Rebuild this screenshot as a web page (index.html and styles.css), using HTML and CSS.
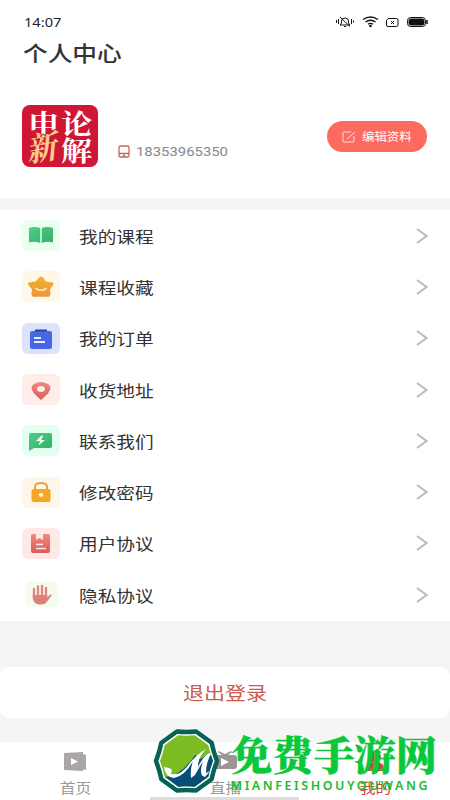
FILE: index.html
```html
<!DOCTYPE html>
<html lang="zh-CN">
<head>
<meta charset="utf-8">
<title>个人中心</title>
<link rel="stylesheet" href="styles.css">
</head>
<body>
<div class="app">
  <header class="status">
    <span class="time">14:07</span>
    <svg class="status-icons" width="94" height="14" viewBox="0 0 94 14" fill="none" stroke="#111" stroke-width="1">
      <path d="M1.500 5v3M3.500 4v5M16.500 4v5M18.500 5.500v2M5 10h10l-1.500-2V6q0-3-3.500-3T6.500 6v2L5 10M9 11.500h2M5 2l10 9.500"/>
      <g stroke-width="1.400"><path d="M28 4.500q7.500-5 15 0M30.500 7q5-3.500 10 0M33 9.300q2.500-1.800 5 0"/><circle cx="35.500" cy="11" r=".6" fill="#111"/></g>
      <path d="M53 3.500h8.500q1.500 0 1.500 1.500v5q0 1.500-1.500 1.500H53q-1.500 0-1.500-1.500V5.500zM56 6l3 3M59 6l-3 3"/>
      <rect x="72.500" y="2.500" width="18" height="9" rx="3"/><rect x="74" y="4" width="15" height="6" rx="1.500" fill="#111"/><path d="M92 5v4" stroke-width="1.500"/>
    </svg>
  </header>
  <h1 class="title"><span>个人中心</span></h1>

  <section class="profile">
    <div class="avatar">
      <svg width="76" height="62" viewBox="0 0 76 62">
        <rect width="76" height="62" rx="8" fill="#cf1735"/>
        <g class="avatar-text" fill="#fff">
          <text transform="translate(6 29) scale(1.160 1)" font-size="27">申</text>
          <text transform="translate(39 29) scale(1.160 1)" font-size="27">论</text>
          <text transform="translate(39 56) scale(1.160 1)" font-size="27">解</text>
        </g>
        <text class="avatar-text" transform="translate(6 57) rotate(-9) skewX(-14) scale(1 1.080)" font-size="30" fill="#f8ca8d" stroke="#cf1735" stroke-width="1.500" paint-order="stroke">新</text>
      </svg>
    </div>
    <div class="phone">
      <svg width="12" height="13" viewBox="0 0 12 13" fill="none" stroke="#c5655d" stroke-width="1.300"><rect x="1" y="1" width="10" height="11" rx="1.500"/><path d="M1 8.500h10M5 10.300h2"/></svg>
      <span>18353965350</span>
    </div>
    <div class="edit">
      <svg width="14" height="12" viewBox="0 0 14 12" fill="none" stroke="#ffe3df" stroke-width="1"><path d="M9 1H2q-1 0-1 1v8q0 1 1 1h9q1 0 1-1V5M5 8l8-7"/></svg>
      <span>编辑资料</span>
    </div>
  </section>

  <main class="menu">
    <div class="row"><svg class="tile" viewBox="0 0 38 31">
      <defs>
        <linearGradient id="green" x2="1" y2="1"><stop stop-color="#4cd083"/><stop offset="1" stop-color="#35ac68"/></linearGradient>
        <linearGradient id="gold" x2="0" y2="1"><stop stop-color="#f3b12d"/><stop offset="1" stop-color="#ed943b"/></linearGradient>
        <linearGradient id="blue" x2="0" y2="1"><stop stop-color="#456bd8"/><stop offset="1" stop-color="#4862ee"/></linearGradient>
        <linearGradient id="red" x2="0" y2="1"><stop stop-color="#ef8b7e"/><stop offset="1" stop-color="#d95c56"/></linearGradient>
      </defs>
      <rect width="38" height="31" rx="6" fill="#eafff0"/><path d="M7 8q6-2 11 0v15q-5-2-11-.5zM20 8q5-2 11 0v14.500q-6-1.500-11 .5z" fill="url(#green)"/><path d="M18 8.500l1 1 1-1v14.500h-2z" fill="#b8efcf"/></svg><span class="label">我的课程</span><svg class="chevron" viewBox="0 0 12 16"><path d="M1 1l9.500 7L1 15"/></svg></div>
    <div class="row"><svg class="tile" viewBox="0 0 38 31"><rect width="38" height="31" rx="6" fill="#fff8ea"/><path d="M17 6.500q2-2 4 0l3 4 6 .8q3 1 .8 3L28 18.500l.5 5q-.5 3-3.500 2.300H13q-3 .7-3.500-2.300l.5-5-3.300-4.200q-2-2 1-3l6-.8z" fill="url(#gold)"/><path d="M14 17.500q5 3.500 10 0" fill="none" stroke="#fff0b8" stroke-width="1.600" stroke-linecap="round"/></svg><span class="label">课程收藏</span><svg class="chevron" viewBox="0 0 12 16"><path d="M1 1l9.500 7L1 15"/></svg></div>
    <div class="row"><svg class="tile" viewBox="0 0 38 31"><rect width="38" height="31" rx="6" fill="#dce2fc"/><rect x="8" y="8" width="22" height="18" rx="2" fill="url(#blue)"/><path d="M13 6.500h12v2H13z" fill="#28469f"/><path d="M12 15h7M12 19h11" stroke="#e8edff" stroke-width="2"/></svg><span class="label">我的订单</span><svg class="chevron" viewBox="0 0 12 16"><path d="M1 1l9.500 7L1 15"/></svg></div>
    <div class="row"><svg class="tile" viewBox="0 0 38 31"><rect width="38" height="31" rx="6" fill="#ffedea"/><path d="M19 26l-7-6.500q-5-6.500 0-9.500 7-4 14 0 5 3 0 9.500z" fill="url(#red)"/><ellipse cx="19" cy="15" rx="4" ry="3" fill="#ffe9e4"/></svg><span class="label">收货地址</span><svg class="chevron" viewBox="0 0 12 16"><path d="M1 1l9.500 7L1 15"/></svg></div>
    <div class="row"><svg class="tile" viewBox="0 0 38 31"><rect width="38" height="31" rx="6" fill="#e3fff0"/><path d="M9 8h19q2 0 2 2v11q0 2-2 2H12l-5 3V10q0-2 2-2z" fill="url(#green)"/><path d="M19.500 10.500L14 16h4l-1.500 4.500L23 15h-4l2-4z" fill="#f1fff5"/></svg><span class="label">联系我们</span><svg class="chevron" viewBox="0 0 12 16"><path d="M1 1l9.500 7L1 15"/></svg></div>
    <div class="row"><svg class="tile" viewBox="0 0 38 31"><rect width="38" height="31" rx="6" fill="#fff6e7"/><path d="M13 13V10q0-4 6-4t6 4v3" fill="none" stroke="#dda848" stroke-width="2"/><rect x="9.500" y="12" width="19" height="13" rx="2" fill="#f5a623"/><ellipse cx="19" cy="18" rx="2.300" ry="2" fill="#fff5dc"/></svg><span class="label">修改密码</span><svg class="chevron" viewBox="0 0 12 16"><path d="M1 1l9.500 7L1 15"/></svg></div>
    <div class="row"><svg class="tile" viewBox="0 0 38 31"><rect width="38" height="31" rx="6" fill="#ffe8e5"/><path d="M11 6h3v6l3.500-2 3.500 2V6h5q2 0 2 2v15q0 2-2 2H11q-2 0-2-2V8q0-2 2-2z" fill="url(#red)"/><path d="M14 16.500h7M14 20.500h10" stroke="#ffe8e3" stroke-width="1.600"/></svg><span class="label">用户协议</span><svg class="chevron" viewBox="0 0 12 16"><path d="M1 1l9.500 7L1 15"/></svg></div>
    <div class="row"><svg class="tile" viewBox="0 0 38 31"><rect x="3" y="2" width="33" height="26" rx="6" fill="#f6fbef"/><path d="M12 10v8M16 7.500V18M20 7v11M24 9v9" stroke="#e08a7f" stroke-width="2.400" stroke-linecap="round"/><path d="M10.800 16h14.500v2.500l3-3q2-.3 1.200 1L25.500 22q-2 3.500-7 3.500-7 0-7.700-6z" fill="#dc8176"/></svg><span class="label">隐私协议</span><svg class="chevron" viewBox="0 0 12 16"><path d="M1 1l9.500 7L1 15"/></svg></div>
  </main>

  <div class="logout"><span>退出登录</span></div>

  <nav class="tabs">
    <div class="tab"><svg width="24" height="21" viewBox="0 0 24 21"><path d="M1 2l19-1v2l3 1v15l-3-.5v1.500L1 19z" fill="#aaa5a7"/><path d="M8 7l7 3.500L8 14z" fill="#fff"/></svg><span>首页</span></div>
    <div class="tab"><svg width="26" height="21" viewBox="0 0 26 21"><path d="M7 0l6 3 6-3 1 1-4 3h6q3 0 3 3v8q0 3-3 3H4q-3 0-3-3V7q0-3 3-3h6L6 1z" fill="#9b9597"/><path d="M9 7l8 4-8 4z" fill="#fff"/></svg><span>直播</span></div>
    <div class="tab active"><svg width="24" height="21" viewBox="0 0 24 21"><ellipse cx="12" cy="6" rx="6" ry="5.500" fill="#c94b43"/><path d="M2 20q0-9 10-9t10 9z" fill="#c94b43"/></svg><span>我的</span></div>
  </nav>
  <div class="home-bar"></div>

  <div class="watermark">
    <svg width="298" height="72" viewBox="0 0 298 72">
      <defs>
        <path id="badge" d="M43.100 4.500Q50 9.500 58.600 15.800Q60.500 25 64 34Q60.500 43 58.600 52.200Q50 58.500 43.100 63.500Q33.500 62.500 23.900 63.500Q17 58.500 8.400 52.200Q6.500 43 3 34Q6.500 25 8.400 15.800Q17 9.500 23.900 4.500Q33.500 5.500 43.100 4.500z"/>
        <clipPath id="inner"><use href="#badge" transform="translate(4.350 4.420) scale(.87)"/></clipPath>
      </defs>
      <use href="#badge" fill="#fff" stroke="#066157" stroke-width="4.500" stroke-linejoin="round"/>
      <g clip-path="url(#inner)">
        <path d="M0 0h70v70H0z" fill="#7dbd24"/>
        <path d="M8 50q18 2 34-22l6 4 14-11v50H8z" fill="#064e79"/>
        <path d="M11 40l5 1 3 2-1 4q10 2 18-10 7-9 17-15-8 8-8 18 6-13 15-16-7 9-7 22l4-2-5 6q-7-1-2-16l-8 14-4 3q-1-9 2-17Q32 49 21 51 12 50 11 40z" fill="#fff"/>
      </g>
      <text class="mark-cn" transform="translate(78 43) scale(1 .97)" font-size="41.500" textLength="206" lengthAdjust="spacingAndGlyphs">免费手游网</text>
      <text class="mark-en" x="77.500" y="63" font-size="12.500" textLength="197">MIANFEISHOUYOUWANG</text>
    </svg>
  </div>
</div>
</body>
</html>
```
FILE: styles.css
```css
* { box-sizing: border-box; }

body {
  margin: 0;
  font-family: "Noto Sans", "Noto Sans CJK SC", sans-serif;
  color: #333;
}

.app {
  position: relative;
  display: flex;
  flex-direction: column;
  width: 450px;
  height: 800px;
  overflow: hidden;
  background: #f5f5f5;
}

svg { display: block; flex: none; }

.status {
  display: flex;
  justify-content: space-between;
  align-items: center;
  height: 36px;
  padding: 8px 21px 0 24px;
  background: #fff;
}

.time {
  font-size: 12.5px;
  color: #222;
  transform: scaleX(1.17);
  transform-origin: left;
}

.title {
  margin: 0;
  height: 46px;
  padding-left: 23px;
  font-size: 21px;
  font-weight: 500;
  line-height: 35px;
  background: #fff;
}

.title span {
  display: inline-block;
  transform: scaleX(1.175);
  transform-origin: left;
}

.profile {
  display: flex;
  height: 116px;
  padding: 23px 23px 0 22px;
  background: #fff;
}

.avatar-text { font-family: "Noto Serif CJK SC", "Noto Sans CJK SC", serif; font-weight: 700; }

.phone {
  display: flex;
  align-items: center;
  gap: 6px;
  height: 20px;
  margin: 36px 0 0 20px;
  font-family: Roboto, sans-serif;
  font-size: 12.5px;
  color: #888;
}

.phone span {
  transform: scaleX(1.19);
  transform-origin: left;
}

.edit {
  display: flex;
  align-items: center;
  gap: 6px;
  width: 100px;
  height: 31px;
  margin: 16px 0 0 auto;
  padding-left: 15px;
  border-radius: 16px;
  background: #fc6a60;
  color: #fff;
  font-size: 11px;
}

.edit span {
  margin-top: -2px;
  transform: scaleX(1.13);
  transform-origin: left;
}

.menu {
  height: 410.5px;
  margin-top: 12px;
  background: #fff;
}

.row {
  display: flex;
  align-items: center;
  height: 51.3px;
  padding: 0 22px;
}

.tile { width: 38px; height: 31px; }

.label {
  margin: 0 0 0 19px;
  font-size: 16px;
  transform: scaleX(1.165);
  transform-origin: left;
}

.chevron {
  width: 12px;
  height: 16px;
  margin-left: auto;
  fill: none;
  stroke: #bbb;
  stroke-width: 2;
}

.logout {
  display: flex;
  justify-content: center;
  align-items: center;
  height: 51px;
  margin-top: 46.5px;
  padding-bottom: 2px;
  border-radius: 9px;
  background: #fff;
  color: #cb5a50;
  font-size: 18px;
}

.logout span { transform: scaleX(1.165); }

.tabs {
  display: flex;
  height: 58px;
  margin-top: 24px;
  background: #fff;
}

.tab {
  display: flex;
  flex: 1;
  flex-direction: column;
  align-items: center;
  gap: 5px;
  padding-top: 9px;
  color: #999;
  font-size: 13.5px;
  line-height: 22px;
}

.tab span { transform: scaleX(1.165); }
.tab.active { color: #c94b43; }

.home-bar {
  position: absolute;
  left: 150px;
  bottom: 0;
  width: 149px;
  height: 3px;
  background: #ddd;
}

.watermark {
  position: absolute;
  left: 153px;
  top: 727px;
}

.mark-cn {
  font-family: "Noto Serif CJK SC", "Noto Sans CJK SC", serif;
  font-weight: 900;
  fill: #09c83c;
  stroke: #09c83c;
  stroke-width: 0.4;
}

.mark-en {
  font-family: "Noto Sans", sans-serif;
  font-weight: 600;
  fill: #16bd2c;
}
```
